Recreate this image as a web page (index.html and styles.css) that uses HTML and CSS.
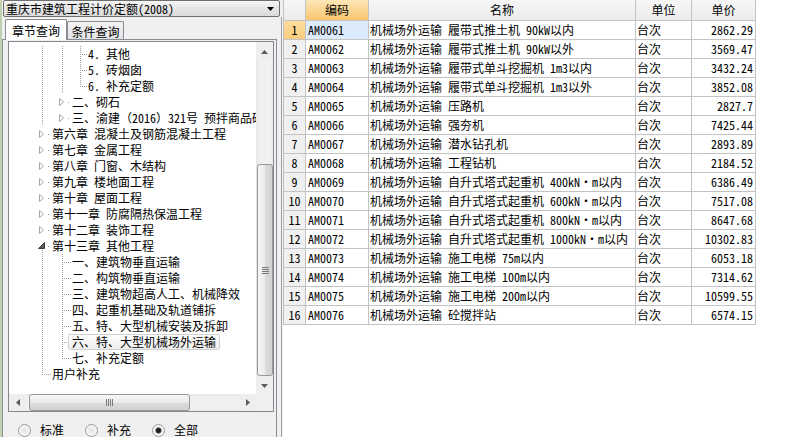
FILE: index.html
```html
<!DOCTYPE html>
<html lang="zh-CN">
<head>
<meta charset="utf-8">
<title>定额查询</title>
<link rel="stylesheet" href="styles.css">
</head>
<body>
<div class="app">
  <aside class="left">
    <div class="combo">
      <span class="combo-text">重庆市建筑工程计价定额(2008)</span>
      <svg class="combo-arrow" width="7" height="4" viewBox="0 0 7 4"><path d="M0 0h7L3.5 4z" fill="#000"/></svg>
    </div>
    <div class="lower">
      <div class="tabs-wrap">
        <div class="tabs">
          <div class="tab active">章节查询</div>
          <div class="tab">条件查询</div>
        </div>
        <div class="page">
          <div class="treebox">
            <div class="tmain">
              <div class="tree">
                <div class="row"><span class="sp"></span><span class="c v"></span><span class="c v"></span><span class="c3 tee"></span><span class="lbl">4. 其他</span></div>
                <div class="row"><span class="sp"></span><span class="c v"></span><span class="c v"></span><span class="c3 tee"></span><span class="lbl">5. 砖烟囱</span></div>
                <div class="row"><span class="sp"></span><span class="c v"></span><span class="c v"></span><span class="c3 end"></span><span class="lbl">6. 补充定额</span></div>
                <div class="row"><span class="sp"></span><span class="c v"></span><span class="c"><svg class="exp" width="20" height="16" viewBox="0 0 20 16"><path d="M7.5 4.5v7l4-3.5z" fill="#fff" stroke="#a6a6a6"/><rect x="16" y="8" width="1" height="1" fill="#a0a0a0"/></svg></span><span class="lbl">二、砌石</span></div>
                <div class="row"><span class="sp"></span><span class="c v"></span><span class="c"><svg class="exp" width="20" height="16" viewBox="0 0 20 16"><path d="M7.5 4.5v7l4-3.5z" fill="#fff" stroke="#a6a6a6"/><rect x="16" y="8" width="1" height="1" fill="#a0a0a0"/></svg></span><span class="lbl">三、渝建（2016）321号 预拌商品砼</span></div>
                <div class="row"><span class="sp"></span><span class="c"><svg class="exp" width="20" height="16" viewBox="0 0 20 16"><path d="M7.5 4.5v7l4-3.5z" fill="#fff" stroke="#a6a6a6"/><rect x="16" y="8" width="1" height="1" fill="#a0a0a0"/></svg></span><span class="lbl">第六章 混凝土及钢筋混凝土工程</span></div>
                <div class="row"><span class="sp"></span><span class="c"><svg class="exp" width="20" height="16" viewBox="0 0 20 16"><path d="M7.5 4.5v7l4-3.5z" fill="#fff" stroke="#a6a6a6"/><rect x="16" y="8" width="1" height="1" fill="#a0a0a0"/></svg></span><span class="lbl">第七章 金属工程</span></div>
                <div class="row"><span class="sp"></span><span class="c"><svg class="exp" width="20" height="16" viewBox="0 0 20 16"><path d="M7.5 4.5v7l4-3.5z" fill="#fff" stroke="#a6a6a6"/><rect x="16" y="8" width="1" height="1" fill="#a0a0a0"/></svg></span><span class="lbl">第八章 门窗、木结构</span></div>
                <div class="row"><span class="sp"></span><span class="c"><svg class="exp" width="20" height="16" viewBox="0 0 20 16"><path d="M7.5 4.5v7l4-3.5z" fill="#fff" stroke="#a6a6a6"/><rect x="16" y="8" width="1" height="1" fill="#a0a0a0"/></svg></span><span class="lbl">第九章 楼地面工程</span></div>
                <div class="row"><span class="sp"></span><span class="c"><svg class="exp" width="20" height="16" viewBox="0 0 20 16"><path d="M7.5 4.5v7l4-3.5z" fill="#fff" stroke="#a6a6a6"/><rect x="16" y="8" width="1" height="1" fill="#a0a0a0"/></svg></span><span class="lbl">第十章 屋面工程</span></div>
                <div class="row"><span class="sp"></span><span class="c"><svg class="exp" width="20" height="16" viewBox="0 0 20 16"><path d="M7.5 4.5v7l4-3.5z" fill="#fff" stroke="#a6a6a6"/><rect x="16" y="8" width="1" height="1" fill="#a0a0a0"/></svg></span><span class="lbl">第十一章 防腐隔热保温工程</span></div>
                <div class="row"><span class="sp"></span><span class="c"><svg class="exp" width="20" height="16" viewBox="0 0 20 16"><path d="M7.5 4.5v7l4-3.5z" fill="#fff" stroke="#a6a6a6"/><rect x="16" y="8" width="1" height="1" fill="#a0a0a0"/></svg></span><span class="lbl">第十二章 装饰工程</span></div>
                <div class="row"><span class="sp"></span><span class="c vlow"><svg class="exp" width="20" height="16" viewBox="0 0 20 16"><path d="M12.5 4.5v6h-6z" fill="#595959" stroke="#3c3c3c" stroke-linejoin="round"/><rect x="16" y="8" width="1" height="1" fill="#a0a0a0"/></svg></span><span class="lbl">第十三章 其他工程</span></div>
                <div class="row"><span class="sp"></span><span class="c v"></span><span class="c tee"></span><span class="lbl">一、建筑物垂直运输</span></div>
                <div class="row"><span class="sp"></span><span class="c v"></span><span class="c tee"></span><span class="lbl">二、构筑物垂直运输</span></div>
                <div class="row"><span class="sp"></span><span class="c v"></span><span class="c tee"></span><span class="lbl">三、建筑物超高人工、机械降效</span></div>
                <div class="row"><span class="sp"></span><span class="c v"></span><span class="c tee"></span><span class="lbl">四、起重机基础及轨道铺拆</span></div>
                <div class="row"><span class="sp"></span><span class="c v"></span><span class="c tee"></span><span class="lbl">五、特、大型机械安装及拆卸</span></div>
                <div class="row"><span class="sp"></span><span class="c v"></span><span class="c tee"></span><span class="lbl sel">六、特、大型机械场外运输</span></div>
                <div class="row"><span class="sp"></span><span class="c v"></span><span class="c end"></span><span class="lbl">七、补充定额</span></div>
                <div class="row"><span class="sp"></span><span class="c end"></span><span class="lbl">用户补充</span></div>
              </div>
              <div class="vs">
                <div class="sbtn up"><svg width="7" height="4" viewBox="0 0 7 4"><path d="M3.5 0L7 4H0z" fill="#5a5a5a"/></svg></div>
                <div class="vtrack">
                  <div class="vthumb"><svg width="7" height="7" viewBox="0 0 7 7"><path d="M0 .5h7M0 2.5h7M0 4.5h7M0 6.5h7" stroke="#7a7a7a"/></svg></div>
                </div>
                <div class="sbtn"><svg width="7" height="4" viewBox="0 0 7 4"><path d="M0 0h7L3.5 4z" fill="#5a5a5a"/></svg></div>
              </div>
            </div>
            <div class="hrow">
              <div class="hs">
                <div class="sbtn"><svg width="4" height="7" viewBox="0 0 4 7"><path d="M4 0v7L0 3.5z" fill="#5a5a5a"/></svg></div>
                <div class="htrack">
                  <div class="hthumb"><svg width="7" height="7" viewBox="0 0 7 7"><path d="M.5 0v7M2.5 0v7M4.5 0v7M6.5 0v7" stroke="#7a7a7a"/></svg></div>
                </div>
                <div class="sbtn"><svg width="4" height="7" viewBox="0 0 4 7"><path d="M0 0v7l4-3.5z" fill="#5a5a5a"/></svg></div>
              </div>
              <div class="corner"></div>
            </div>
          </div>
          <div class="radios">
            <label class="radio"><span class="rb"></span>标准</label>
            <label class="radio"><span class="rb"></span>补充</label>
            <label class="radio"><span class="rb on"></span>全部</label>
          </div>
        </div>
      </div>
      <div class="split"></div>
    </div>
  </aside>
  <main class="right">
    <div class="grid">
      <div class="gr head"><div class="cell rn"></div><div class="cell hd hot">编码</div><div class="cell hd">名称</div><div class="cell hd">单位</div><div class="cell hd">单价</div></div>
      <div class="gr"><div class="cell rn cur">1</div><div class="cell code cur-cell">AM0061</div><div class="cell name">机械场外运输 履带式推土机 90kW以内</div><div class="cell unit">台次</div><div class="cell price">2862.29</div></div>
      <div class="gr"><div class="cell rn">2</div><div class="cell code">AM0062</div><div class="cell name">机械场外运输 履带式推土机 90kW以外</div><div class="cell unit">台次</div><div class="cell price">3569.47</div></div>
      <div class="gr"><div class="cell rn">3</div><div class="cell code">AM0063</div><div class="cell name">机械场外运输 履带式单斗挖掘机 1m3以内</div><div class="cell unit">台次</div><div class="cell price">3432.24</div></div>
      <div class="gr"><div class="cell rn">4</div><div class="cell code">AM0064</div><div class="cell name">机械场外运输 履带式单斗挖掘机 1m3以外</div><div class="cell unit">台次</div><div class="cell price">3852.08</div></div>
      <div class="gr"><div class="cell rn">5</div><div class="cell code">AM0065</div><div class="cell name">机械场外运输 压路机</div><div class="cell unit">台次</div><div class="cell price">2827.7</div></div>
      <div class="gr"><div class="cell rn">6</div><div class="cell code">AM0066</div><div class="cell name">机械场外运输 强夯机</div><div class="cell unit">台次</div><div class="cell price">7425.44</div></div>
      <div class="gr"><div class="cell rn">7</div><div class="cell code">AM0067</div><div class="cell name">机械场外运输 潜水钻孔机</div><div class="cell unit">台次</div><div class="cell price">2893.89</div></div>
      <div class="gr"><div class="cell rn">8</div><div class="cell code">AM0068</div><div class="cell name">机械场外运输 工程钻机</div><div class="cell unit">台次</div><div class="cell price">2184.52</div></div>
      <div class="gr"><div class="cell rn">9</div><div class="cell code">AM0069</div><div class="cell name">机械场外运输 自升式塔式起重机 400kN·m以内</div><div class="cell unit">台次</div><div class="cell price">6386.49</div></div>
      <div class="gr"><div class="cell rn">10</div><div class="cell code">AM0070</div><div class="cell name">机械场外运输 自升式塔式起重机 600kN·m以内</div><div class="cell unit">台次</div><div class="cell price">7517.08</div></div>
      <div class="gr"><div class="cell rn">11</div><div class="cell code">AM0071</div><div class="cell name">机械场外运输 自升式塔式起重机 800kN·m以内</div><div class="cell unit">台次</div><div class="cell price">8647.68</div></div>
      <div class="gr"><div class="cell rn">12</div><div class="cell code">AM0072</div><div class="cell name">机械场外运输 自升式塔式起重机 1000kN·m以内</div><div class="cell unit">台次</div><div class="cell price">10302.83</div></div>
      <div class="gr"><div class="cell rn">13</div><div class="cell code">AM0073</div><div class="cell name">机械场外运输 施工电梯 75m以内</div><div class="cell unit">台次</div><div class="cell price">6053.18</div></div>
      <div class="gr"><div class="cell rn">14</div><div class="cell code">AM0074</div><div class="cell name">机械场外运输 施工电梯 100m以内</div><div class="cell unit">台次</div><div class="cell price">7314.62</div></div>
      <div class="gr"><div class="cell rn">15</div><div class="cell code">AM0075</div><div class="cell name">机械场外运输 施工电梯 200m以内</div><div class="cell unit">台次</div><div class="cell price">10599.55</div></div>
      <div class="gr"><div class="cell rn">16</div><div class="cell code">AM0076</div><div class="cell name">机械场外运输 砼搅拌站</div><div class="cell unit">台次</div><div class="cell price">6574.15</div></div>
    </div>
  </main>
</div>
</body>
</html>
```

FILE: styles.css
```css
* { box-sizing: border-box; margin: 0; padding: 0; }
html, body { width: 785px; height: 437px; overflow: hidden; background: #fff; }
body {
  font-family: "Noto Sans Mono CJK SC", "Noto Sans CJK SC", "DejaVu Sans Mono", monospace;
  font-size: 12px;
  color: #000;
}
.app { display: flex; width: 785px; height: 437px; }

/* ---------- left panel ---------- */
.left {
  width: 283px; flex: none;
  display: flex; flex-direction: column;
  background: #f0f0f0;
  border-left: 2px solid #c2d1ad;
}
.combo {
  height: 17px; margin: 0 3px 0 1px;
  border: 1px solid #707070; border-radius: 2px;
  background: linear-gradient(#f6f6f6, #e6e6e6 50%, #dadada);
  display: flex; align-items: center; justify-content: space-between;
  padding: 0 5px 0 2px; line-height: 15px;
}
.combo-arrow { display: block; }
.lower { flex: 1; display: flex; min-height: 0; }
.tabs-wrap { width: 275px; display: flex; flex-direction: column; }
.tabs { height: 23px; display: flex; align-items: flex-end; padding-left: 3px; }
.tab {
  height: 18px; width: 57px;
  border: 1px solid #898c95; border-bottom: none; border-radius: 2px 2px 0 0;
  background: linear-gradient(#f3f3f3, #e3e3e3);
  display: flex; align-items: center; justify-content: center;
  line-height: 16px; padding-top: 2px;
}
.tab.active {
  height: 21px; width: 62px; margin-bottom: -1px;
  background: #fff; position: relative; z-index: 1;
}
.page {
  flex: 1; border: 1px solid #898c95; border-bottom: none;
  background: #f0f0f0;
  padding: 1px 2px 0 5px;
  display: flex; flex-direction: column;
}
.split { flex: 1; margin-right: 1px; border-right: 1px solid #a0a0a0; }

/* tree box */
.treebox {
  height: 371px; border: 1px solid #828790; background: #fff;
  display: flex; flex-direction: column;
}
.tmain { flex: 1; display: flex; min-height: 0; }
.tree { flex: 1; min-width: 0; overflow: hidden; padding-top: 4px; }
.row { height: 16px; display: flex; align-items: center; white-space: nowrap; line-height: 16px; overflow: hidden; }
.sp { width: 23px; height: 16px; flex: none; }
.c { width: 20px; height: 16px; flex: none; display: flex; }
.c3 { width: 16px; height: 16px; flex: none; }
.exp { display: block; }
.lbl { flex: 0 1 auto; min-width: 0; overflow: hidden; }
.lbl.sel {
  flex: none;
  margin-left: -4px; padding: 0 3px; height: 16px; line-height: 14px;
  border: 1px solid #d0d0d0; border-radius: 2px;
  background: linear-gradient(#fdfdfd, #ededed);
}
.c.v {
  background: repeating-linear-gradient(to bottom, #a0a0a0 0 1px, transparent 1px 2px) 10px 0 / 1px 16px no-repeat;
}
.c.vlow {
  background: repeating-linear-gradient(to bottom, #a0a0a0 0 1px, transparent 1px 2px) 10px 12px / 1px 4px no-repeat;
}
.c.tee {
  background:
    repeating-linear-gradient(to bottom, #a0a0a0 0 1px, transparent 1px 2px) 10px 0 / 1px 16px no-repeat,
    repeating-linear-gradient(to right, #a0a0a0 0 1px, transparent 1px 2px) 12px 8px / 7px 1px no-repeat;
}
.c.end {
  background:
    repeating-linear-gradient(to bottom, #a0a0a0 0 1px, transparent 1px 2px) 10px 0 / 1px 9px no-repeat,
    repeating-linear-gradient(to right, #a0a0a0 0 1px, transparent 1px 2px) 12px 8px / 7px 1px no-repeat;
}
.c3.tee {
  background:
    repeating-linear-gradient(to bottom, #a0a0a0 0 1px, transparent 1px 2px) 8px 0 / 1px 16px no-repeat,
    repeating-linear-gradient(to right, #a0a0a0 0 1px, transparent 1px 2px) 10px 8px / 5px 1px no-repeat;
}
.c3.end {
  background:
    repeating-linear-gradient(to bottom, #a0a0a0 0 1px, transparent 1px 2px) 8px 0 / 1px 9px no-repeat,
    repeating-linear-gradient(to right, #a0a0a0 0 1px, transparent 1px 2px) 10px 8px / 5px 1px no-repeat;
}

/* scrollbars */
.vs { width: 17px; flex: none; display: flex; flex-direction: column; background: #ededed; }
.sbtn { width: 17px; height: 17px; flex: none; display: flex; align-items: center; justify-content: center; background: #eeeeee; }
.sbtn.up { padding-top: 3px; }
.sbtn svg { display: block; }
.vtrack {
  flex: 1; display: flex; flex-direction: column; padding: 105px 0 1px;
  background: linear-gradient(to right, #e4e4e4, #efefef 3px, #f1f1f1 14px, #e9e9e9);
}
.vthumb {
  flex: 1; margin: 0 0 0 1px;
  border: 1px solid #989898; border-radius: 3px;
  background: linear-gradient(to right, #f6f6f6, #eaeaea 50%, #dcdcdc 51%, #d2d2d2);
  display: flex; align-items: center; justify-content: center;
}
.hrow { height: 17px; flex: none; display: flex; }
.hs { flex: 1; display: flex; background: #ededed; }
.htrack {
  flex: 1; display: flex; padding: 0 0 0 3px;
  background: linear-gradient(#e4e4e4, #efefef 3px, #f1f1f1 14px, #e9e9e9);
}
.hthumb {
  width: 161px; height: 17px;
  border: 1px solid #989898; border-radius: 3px;
  background: linear-gradient(#f6f6f6, #eaeaea 50%, #dcdcdc 51%, #d2d2d2);
  display: flex; align-items: center; justify-content: center;
}
.corner { width: 17px; flex: none; background: #f0f0f0; }

/* radios */
.radios { height: 14px; margin-top: 11px; padding-left: 10px; display: flex; align-items: center; }
.radio { display: flex; align-items: center; line-height: 14px; margin-right: 21px; }
.rb {
  width: 13px; height: 13px; margin-right: 9px; border-radius: 50%;
  border: 1px solid #9a9a9a;
  background: radial-gradient(circle, #e2e2e2 0, #f2f2f2 4px, #fafafa 6px);
}
.rb.on {
  background: radial-gradient(circle, #111 0, #2a2a2a 2px, #555 2.8px, #f2f2f2 3.4px, #fafafa 6px);
}

/* ---------- right grid ---------- */
.right { flex: 1; background: #fff; overflow: hidden; }
.grid { width: 473px; }
.gr { display: grid; grid-template-columns: 23px 63px 267px 56px 64px; height: 19px; }
.gr.head { height: 21px; }
.cell {
  border-right: 1px solid #c3c3c3; border-bottom: 1px solid #c3c3c3;
  line-height: 18px; white-space: nowrap; overflow: hidden;
}
.head .cell { line-height: 20px; }
.cell.rn { border-left: 1px solid #c3c3c3; background: #f0f0f0; text-align: center; }
.head .cell.rn { background: linear-gradient(#f7f7f7, #ececec); }
.cell.hd { background: linear-gradient(#f7f7f7, #ececec); text-align: center; }
.cell.hd.hot { background: linear-gradient(#fde7b8, #f7c56f); }
.cell.rn.cur { background: linear-gradient(#fcdc9e, #f9cd80); }
.cell.cur-cell { background: #dcebfb; }
.cell.code { padding-left: 2px; }
.cell.name { padding-left: 1px; }
.cell.unit { padding-left: 1px; }
.cell.price { text-align: right; padding-right: 2px; }
```
